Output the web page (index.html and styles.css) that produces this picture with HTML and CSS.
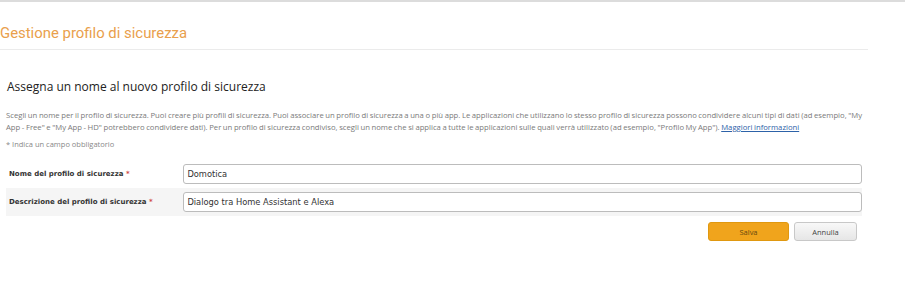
FILE: index.html
```html
<!DOCTYPE html>
<html lang="it">
<head>
    <meta charset="UTF-8">
    <title>Gestione profilo di sicurezza</title>
    <link rel="stylesheet" href="styles.css">
</head>
<body>
    <div class="top-bar"></div>
    <div class="page-header">
        <h1>Gestione profilo di sicurezza</h1>
    </div>

    <div class="content">
        <h2>Assegna un nome al nuovo profilo di sicurezza</h2>
        <p class="intro">Scegli un nome per il profilo di sicurezza. Puoi creare più profili di sicurezza. Puoi associare un profilo di sicurezza a una o più app. Le applicazioni che utilizzano lo stesso profilo di sicurezza possono condividere alcuni tipi di dati (ad esempio, "My App - Free" e "My App - HD" potrebbero condividere dati). Per un profilo di sicurezza condiviso, scegli un nome che si applica a tutte le applicazioni sulle quali verrà utilizzato (ad esempio, "Profilo My App"). <a href="#">Maggiori informazioni</a></p>
        <p class="required-note">* Indica un campo obbligatorio</p>

        <div class="form">
            <div class="form-row">
                <label>Nome del profilo di sicurezza <span class="req">*</span></label>
                <input type="text" class="field" value="Domotica">
            </div>
            <div class="form-row alt">
                <label>Descrizione del profilo di sicurezza <span class="req">*</span></label>
                <input type="text" class="field" value="Dialogo tra Home Assistant e Alexa">
            </div>
        </div>

        <div class="actions">
            <button class="btn btn-primary">Salva</button>
            <button class="btn btn-secondary">Annulla</button>
        </div>
    </div>
</body>
</html>
```
FILE: styles.css
```css
body {
    margin: 0;
    background: #fff;
    font-family: 'Open Sans', sans-serif;
    color: #333;
}

.top-bar {
    height: 2px;
    background: #dcdcdc;
}

/* titolo pagina */
.page-header {
    width: 868px;
    height: 48px;
    border-bottom: 1px solid #ebebeb;
    box-sizing: border-box;
}

.page-header h1 {
    margin: 0;
    padding-top: 21px;
    font-family: Roboto, sans-serif;
    font-weight: 400;
    font-size: 14.9px;
    line-height: 20px;
    color: #e9a04c;
}

.content {
    padding: 0 0 0 6px;
    width: 858px;
}

.content h2 {
    margin: 27px 0 0 1px;
    font-size: 12px;
    font-weight: 400;
    line-height: 20px;
    color: #222;
}

.intro {
    margin: 12px 0 0 0;
    font-size: 7.7px;
    line-height: 12px;
    word-spacing: -0.4px;
    color: #7a7a7a;
}

.intro a {
    color: #2d62a8;
}

.required-note {
    margin: 5px 0 0 0;
    font-size: 7.5px;
    line-height: 12px;
    color: #888;
}

/* campi del modulo */
.form {
    margin-top: 10px;
}

.form-row {
    display: flex;
    align-items: center;
    height: 28px;
    width: 856px;
}

.form-row.alt {
    background: #f5f5f5;
}

.form-row label {
    width: 175px;
    padding-left: 3px;
    font-family: 'DejaVu Sans', Verdana, sans-serif;
    font-size: 7px;
    font-weight: 700;
    color: #333;
}

.req {
    color: #d0494a;
}

.field {
    width: 681px;
    height: 20px;
    box-sizing: border-box;
    margin: 0;
    border: 1px solid #bcbcbc;
    border-radius: 3px;
    padding: 0 3px;
    font-family: 'DejaVu Sans', Verdana, sans-serif;
    font-size: 8.3px;
    color: #333;
    background: #fff;
}

.actions {
    display: flex;
    justify-content: flex-end;
    gap: 5px;
    margin-top: 6px;
    width: 851px;
}

.btn {
    height: 19px;
    border-radius: 3px;
    font-family: 'Open Sans', sans-serif;
    font-size: 7.5px;
    padding: 0;
    cursor: pointer;
}

.btn-primary {
    width: 81px;
    background: #f0a41c;
    border: 1px solid #e09810;
    color: #6a4a10;
}

.btn-secondary {
    width: 63px;
    background: linear-gradient(#f8f8f8, #e6e6e6);
    border: 1px solid #c8c8c8;
    color: #444;
}
```
